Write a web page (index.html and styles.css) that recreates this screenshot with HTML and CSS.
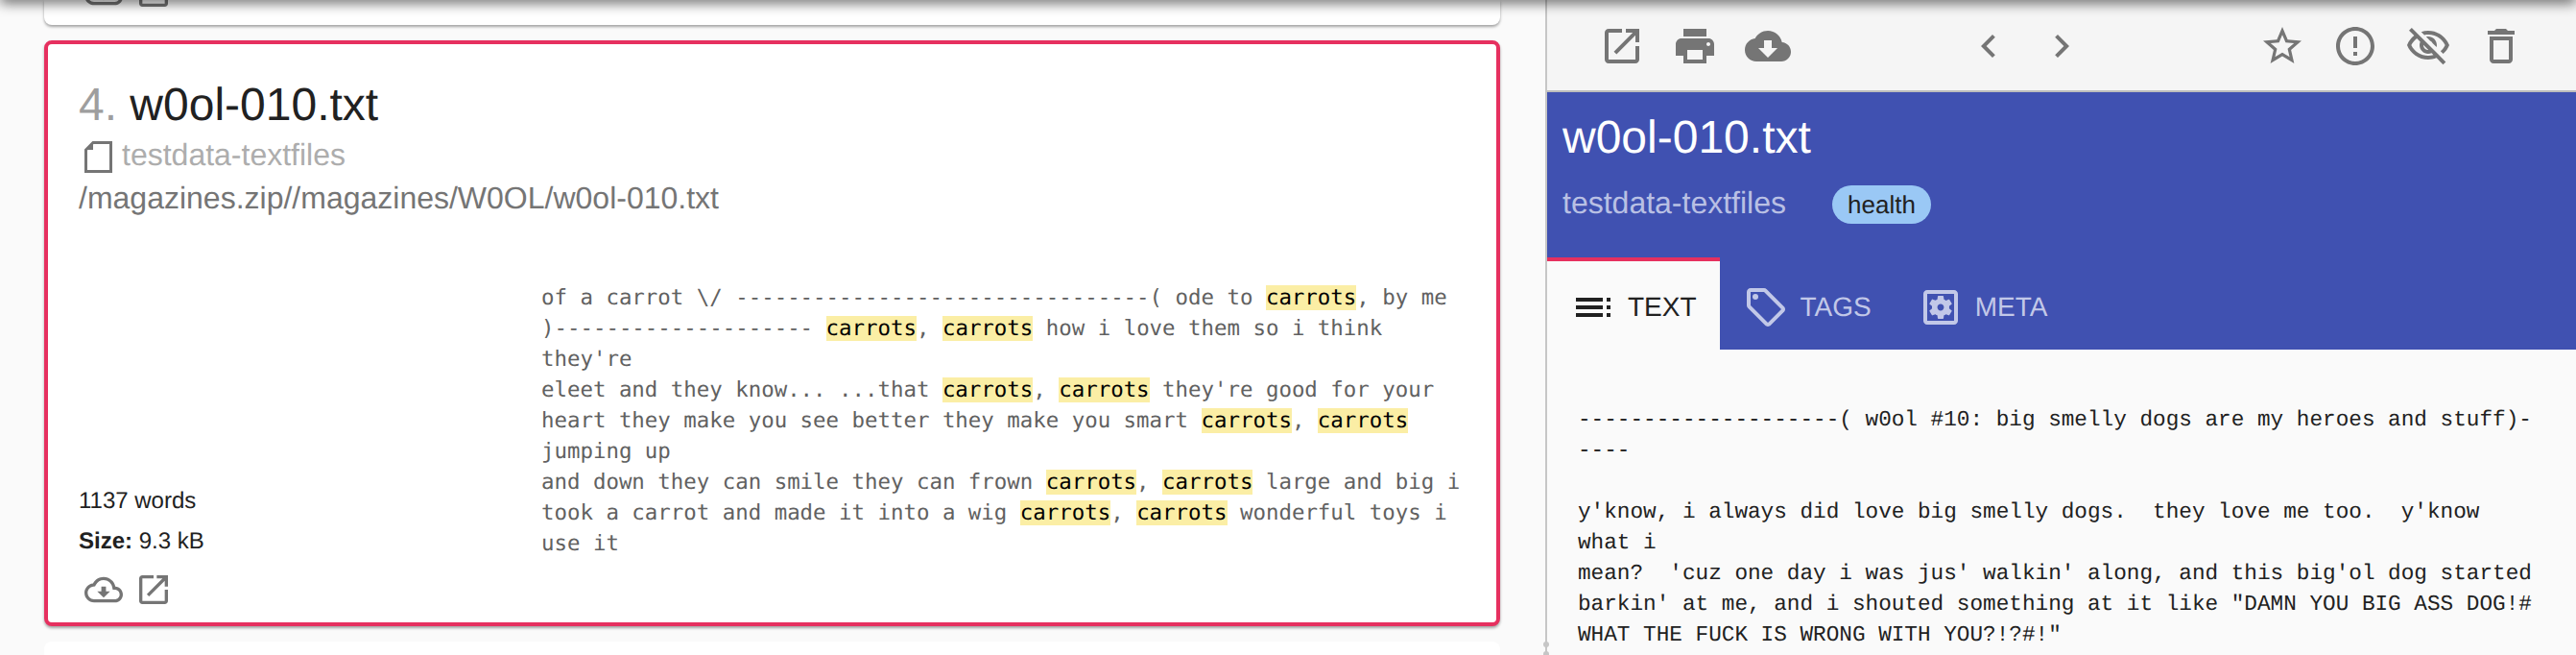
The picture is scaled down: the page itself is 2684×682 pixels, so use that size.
FILE: index.html
```html
<!DOCTYPE html>
<html lang="en">
<head>
<meta charset="utf-8">
<title>w0ol-010.txt</title>
<link rel="stylesheet" href="styles.css">
</head>
<body>
<div class="topshadow"></div>
<div class="app">
  <main class="results">
    <article class="card card-prev">
      <div class="actions actions-clipped">
        <svg class="ico40" viewBox="0 0 24 24"><path d="M19.35 10.04C18.67 6.59 15.64 4 12 4 9.11 4 6.6 5.64 5.35 8.04 2.34 8.36 0 10.91 0 14c0 3.31 2.69 6 6 6h13c2.76 0 5-2.24 5-5 0-2.64-2.05-4.78-4.65-4.96zM19 18H6c-2.21 0-4-1.79-4-4 0-2.05 1.53-3.76 3.56-3.97l1.07-.11.5-.95C8.08 7.14 9.94 6 12 6c2.62 0 4.88 1.86 5.39 4.43l.3 1.5 1.53.11c1.56.1 2.78 1.41 2.78 2.96 0 1.65-1.35 3-3 3zm-5.55-8h-2.9v3H8l4 4 4-4h-2.55z"/></svg>
        <svg class="ico40" viewBox="0 0 24 24"><path d="M19 19H5V5h7V3H5c-1.11 0-2 .9-2 2v14c0 1.1.89 2 2 2h14c1.1 0 2-.9 2-2v-7h-2v7zM14 3v2h3.59l-9.83 9.83 1.41 1.41L19 6.41V10h2V3h-7z"/></svg>
      </div>
    </article>
    <article class="card card-selected">
      <h2 class="hit-title"><span class="hit-num">4.</span> w0ol-010.txt</h2>
      <div class="hit-index">
        <svg class="file-ico" viewBox="0 0 29 33"><path class="file-line" d="M9 1.5H27.5V31.5H1.5V9Z"/><path class="file-fold" d="M9 2V9H2Z"/></svg>
        <span>testdata-textfiles</span>
      </div>
      <div class="hit-path">/magazines.zip//magazines/W0OL/w0ol-010.txt</div>
      <div class="hit-body">
        <div class="hit-stats">
          <p class="stat">1137 words</p>
          <p class="stat"><b>Size:</b> 9.3 kB</p>
          <div class="actions">
            <svg class="ico40" viewBox="0 0 24 24"><path d="M19.35 10.04C18.67 6.59 15.64 4 12 4 9.11 4 6.6 5.64 5.35 8.04 2.34 8.36 0 10.91 0 14c0 3.31 2.69 6 6 6h13c2.76 0 5-2.24 5-5 0-2.64-2.05-4.78-4.65-4.96zM19 18H6c-2.21 0-4-1.79-4-4 0-2.05 1.53-3.76 3.56-3.97l1.07-.11.5-.95C8.08 7.14 9.94 6 12 6c2.62 0 4.88 1.86 5.39 4.43l.3 1.5 1.53.11c1.56.1 2.78 1.41 2.78 2.96 0 1.65-1.35 3-3 3zm-5.55-8h-2.9v3H8l4 4 4-4h-2.55z"/></svg>
            <svg class="ico40" viewBox="0 0 24 24"><path d="M19 19H5V5h7V3H5c-1.11 0-2 .9-2 2v14c0 1.1.89 2 2 2h14c1.1 0 2-.9 2-2v-7h-2v7zM14 3v2h3.59l-9.83 9.83 1.41 1.41L19 6.41V10h2V3h-7z"/></svg>
          </div>
        </div>
<pre class="snippet">of a carrot \/ --------------------------------( ode to <mark>carrots</mark>, by me
)-------------------- <mark>carrots</mark>, <mark>carrots</mark> how i love them so i think
they're
eleet and they know... ...that <mark>carrots</mark>, <mark>carrots</mark> they're good for your
heart they make you see better they make you smart <mark>carrots</mark>, <mark>carrots</mark>
jumping up
and down they can smile they can frown <mark>carrots</mark>, <mark>carrots</mark> large and big i
took a carrot and made it into a wig <mark>carrots</mark>, <mark>carrots</mark> wonderful toys i
use it</pre>
      </div>
    </article>
    <article class="card card-next"></article>
  </main>
  <aside class="viewer">
    <span class="grip grip-a"></span>
    <span class="grip grip-b"></span>
    <div class="toolbar">
      <div class="tool-group">
        <svg class="ico48" viewBox="0 0 24 24"><path d="M19 19H5V5h7V3H5c-1.11 0-2 .9-2 2v14c0 1.1.89 2 2 2h14c1.1 0 2-.9 2-2v-7h-2v7zM14 3v2h3.59l-9.83 9.83 1.41 1.41L19 6.41V10h2V3h-7z"/></svg>
        <svg class="ico48" viewBox="0 0 24 24"><path d="M19 8H5c-1.66 0-3 1.34-3 3v6h4v4h12v-4h4v-6c0-1.66-1.34-3-3-3zm-3 11H8v-5h8v5zm3-7c-.55 0-1-.45-1-1s.45-1 1-1 1 .45 1 1-.45 1-1 1zm-1-9H6v4h12V3z"/></svg>
        <svg class="ico48" viewBox="0 0 24 24"><path d="M19.35 10.04C18.67 6.59 15.64 4 12 4 9.11 4 6.6 5.64 5.35 8.04 2.34 8.36 0 10.91 0 14c0 3.31 2.69 6 6 6h13c2.76 0 5-2.24 5-5 0-2.64-2.05-4.78-4.65-4.96zM17 13l-5 5-5-5h3V9h4v4h3z"/></svg>
      </div>
      <div class="tool-group">
        <svg class="ico48" viewBox="0 0 24 24"><path d="M15.41 7.41L14 6l-6 6 6 6 1.41-1.41L10.83 12z"/></svg>
        <svg class="ico48" viewBox="0 0 24 24"><path d="M10 6L8.59 7.41 13.17 12l-4.58 4.59L10 18l6-6z"/></svg>
      </div>
      <div class="tool-group">
        <svg class="ico48" viewBox="0 0 24 24"><path d="M22 9.24l-7.19-.62L12 2 9.19 8.63 2 9.24l5.46 4.73L5.82 21 12 17.27 18.18 21l-1.63-7.03L22 9.24zM12 15.4l-3.76 2.27 1-4.28-3.32-2.88 4.38-.38L12 6.1l1.71 4.04 4.38.38-3.32 2.88 1 4.28L12 15.4z"/></svg>
        <svg class="ico48" viewBox="0 0 24 24"><path d="M11 15h2v2h-2zm0-8h2v6h-2zm.99-5C6.47 2 2 6.48 2 12s4.47 10 9.99 10C17.52 22 22 17.52 22 12S17.52 2 11.99 2zM12 20c-4.42 0-8-3.58-8-8s3.58-8 8-8 8 3.58 8 8-3.58 8-8 8z"/></svg>
        <svg class="ico48" viewBox="0 0 24 24"><path d="M12 6c3.79 0 7.17 2.13 8.82 5.5-.59 1.22-1.42 2.27-2.41 3.12l1.41 1.41c1.39-1.23 2.49-2.77 3.18-4.53C21.27 7.11 17 4 12 4c-1.27 0-2.49.2-3.64.57l1.65 1.65C10.66 6.09 11.32 6 12 6zm-1.07 1.14L13 9.21c.57.25 1.03.71 1.28 1.28l2.07 2.07c.08-.34.14-.7.14-1.07C16.5 9.01 14.48 7 12 7c-.37 0-.72.05-1.07.14zM2.01 3.87l2.68 2.68C3.06 7.83 1.77 9.53 1 11.5 2.73 15.89 7 19 12 19c1.52 0 2.98-.29 4.32-.82l3.42 3.42 1.41-1.41L3.42 2.45 2.01 3.87zm7.5 7.5l2.61 2.61c-.04.01-.08.02-.12.02-1.38 0-2.5-1.12-2.5-2.5 0-.05.01-.08.01-.13zm-3.4-3.4l1.75 1.75c-.23.55-.36 1.15-.36 1.78 0 2.48 2.02 4.5 4.5 4.5.63 0 1.23-.13 1.77-.36l.98.98c-.88.24-1.8.38-2.75.38-3.79 0-7.17-2.13-8.82-5.5.7-1.43 1.72-2.61 2.93-3.53z"/></svg>
        <svg class="ico48" viewBox="0 0 24 24"><path d="M6 19c0 1.1.9 2 2 2h8c1.1 0 2-.9 2-2V7H6v12zM8 9h8v10H8V9zm7.5-5l-1-1h-5l-1 1H5v2h14V4h-3.5z"/></svg>
      </div>
    </div>
    <header class="doc-head">
      <h1 class="doc-title">w0ol-010.txt</h1>
      <div class="doc-meta">
        <span class="doc-index">testdata-textfiles</span>
        <span class="chip">health</span>
      </div>
    </header>
    <nav class="tabs">
      <div class="tab tab-active">
        <svg class="ico48" viewBox="0 0 24 24"><path d="M3 9h14V7H3v2zm0 4h14v-2H3v2zm0 4h14v-2H3v2zm16 0h2v-2h-2v2zm0-10v2h2V7h-2zm0 6h2v-2h-2v2z"/></svg>
        <span>TEXT</span>
      </div>
      <div class="tab">
        <svg class="ico48" viewBox="0 0 24 24"><path d="M21.41 11.58l-9-9C12.05 2.22 11.55 2 11 2H4c-1.1 0-2 .9-2 2v7c0 .55.22 1.05.59 1.42l9 9c.36.36.86.58 1.41.58s1.05-.22 1.41-.59l7-7c.37-.36.59-.86.59-1.41s-.23-1.06-.59-1.42zM13 20.01L4 11V4h7v-.01l9 8.99-7 7.02z"/><circle cx="6.5" cy="6.5" r="1.5"/></svg>
        <span>TAGS</span>
      </div>
      <div class="tab">
        <svg class="ico48" viewBox="0 0 24 24"><path d="M6.21 13.97l1.2 2.07c.08.13.23.18.37.13l1.49-.6c.31.24.64.44 1.01.59l.22 1.59c.03.14.15.25.3.25h2.4c.15 0 .27-.11.3-.25l.22-1.59c.36-.15.7-.35 1.01-.59l1.49.6c.14.05.29 0 .37-.13l1.2-2.07c.08-.13.04-.29-.07-.39l-1.27-.99c.03-.19.04-.39.04-.58 0-.2-.02-.39-.04-.59l1.27-.99c.11-.09.15-.26.07-.39l-1.2-2.07c-.08-.13-.23-.18-.37-.13l-1.49.6c-.31-.24-.64-.44-1.01-.59l-.22-1.59c-.03-.14-.15-.25-.3-.25h-2.4c-.15 0-.27.11-.3.25l-.22 1.59c-.36.15-.71.34-1.01.58l-1.49-.6c-.14-.05-.29 0-.37.13l-1.2 2.07c-.08.13-.04.29.07.39l1.27.99c-.03.2-.05.39-.05.59 0 .2.02.39.04.59l-1.27.99c-.1.1-.14.26-.06.39zM12 10.29c.94 0 1.71.77 1.71 1.71s-.77 1.71-1.71 1.71-1.71-.77-1.71-1.71.77-1.71 1.71-1.71zM19 3H5c-1.11 0-2 .9-2 2v14c0 1.1.89 2 2 2h14c1.1 0 2-.9 2-2V5c0-1.1-.9-2-2-2zm0 16H5V5h14v14z"/></svg>
        <span>META</span>
      </div>
    </nav>
<pre class="doc-text">--------------------( w0ol #10: big smelly dogs are my heroes and stuff)-
----

y'know, i always did love big smelly dogs.  they love me too.  y'know
what i
mean?  'cuz one day i was jus' walkin' along, and this big'ol dog started
barkin' at me, and i shouted something at it like "DAMN YOU BIG ASS DOG!#
WHAT THE FUCK IS WRONG WITH YOU?!?#!"</pre>
  </aside>
</div>
</body>
</html>
```

FILE: styles.css
```css
* { box-sizing: border-box; }
html, body { margin: 0; height: 682px; overflow: hidden; background: #fafafa; }
body {
  font-family: "Liberation Sans", Arial, sans-serif; color: #212121;
  text-rendering: geometricPrecision;
}

.topshadow {
  position: fixed; top: -10px; left: 0; right: 0; height: 10px; z-index: 5;
  box-shadow: 0 2px 14px rgba(0, 0, 0, .75);
}

.app { display: flex; height: 682px; }

.results {
  width: 1610px; flex: none; padding: 0 47px 0 46px;
  display: flex; flex-direction: column; gap: 16px;
  overflow: hidden;
}

.card { background: #fff; border-radius: 8px; flex: none; box-shadow: 0 2px 3px rgba(0, 0, 0, .35); }
.card-prev { height: 26px; overflow: hidden; padding-left: 42px; border-radius: 0 0 8px 8px; }
.card-next { height: 60px; box-shadow: none; }

.card-selected {
  height: 610px; border: 4px solid #e6305f;
  padding: 35px 32px 0;
}

.hit-title { margin: 0; font-size: 48px; line-height: 58px; font-weight: 400; color: #212121; }
.hit-num { color: #9e9e9e; }
.hit-index { display: flex; align-items: flex-start; height: 45px; font-size: 32px; line-height: 45px; color: #adadad; }
.file-ico { width: 29px; height: 33px; margin: 8px 10px 0 6px; flex: none; }
.file-line { fill: none; stroke: #757575; stroke-width: 3; }
.file-fold { fill: #757575; }
.hit-path { font-size: 32px; line-height: 44px; color: #757575; }

.hit-body { display: flex; align-items: flex-end; margin-top: 66px; }
.hit-stats { width: 482px; flex: none; }
.stat { margin: 0; font-size: 24px; line-height: 42px; color: #212121; }
.stat b { font-weight: 700; }

.actions { display: flex; gap: 12px; margin: 9px 0 0 6px; }
.card-prev .actions { margin-left: 0; margin-top: -28px; }
.ico40 { width: 40px; height: 40px; fill: #757575; flex: none; display: block; }

.snippet {
  margin: 0 0 52px; font-family: "DejaVu Sans Mono", monospace; font-size: 22.4px; line-height: 32px;
  color: #616161;
}
.snippet mark { background: #fbeea5; color: #000; }

.viewer {
  position: relative; flex: 1; min-width: 0; height: 682px;
  border-left: 2px solid #c6c6c6; background: #fafafa; overflow: visible;
}
.grip { position: absolute; left: -4px; width: 6px; height: 6px; border-radius: 50%; background: #c6c6c6; }
.grip-a { top: 668px; }
.grip-b { top: 678px; }

.toolbar {
  height: 96px; background: #f5f5f5; border-bottom: 2px solid #bdbdbd;
  padding: 0 54px; display: flex; justify-content: space-between; align-items: flex-start;
}
.tool-group { display: flex; gap: 28px; padding-top: 24px; }
.ico48 { width: 48px; height: 48px; fill: currentColor; flex: none; display: block; }
.toolbar .ico48 { color: #757575; }

.doc-head { height: 172px; background: #4051b1; padding: 19px 16px 0; color: #fff; }
.doc-title { margin: 0; font-size: 48px; line-height: 58px; font-weight: 400; }
.doc-meta { display: flex; align-items: flex-start; gap: 48px; margin-top: 16px; }
.doc-index { font-size: 32px; line-height: 45px; color: #b9c0e4; }
.chip {
  margin-top: 4px; height: 40px; padding: 0 16px; border-radius: 20px;
  background: #9ac8f5; color: #212121; font-size: 26px; line-height: 40px;
}

.tabs { display: flex; height: 96px; background: #4051b1; }
.tab {
  display: flex; align-items: center; gap: 12px; padding: 4px 24px 0;
  border-top: 4px solid transparent;
  font-size: 28px; color: #c2c8e8;
}
.tab-active { background: #fafafa; border-top-color: #e6305f; color: #212121; }

.doc-text {
  margin: 0; padding: 57px 0 0 32px; font-family: "Liberation Mono", monospace;
  font-size: 22.7px; line-height: 32px; color: #212121;
}
```
